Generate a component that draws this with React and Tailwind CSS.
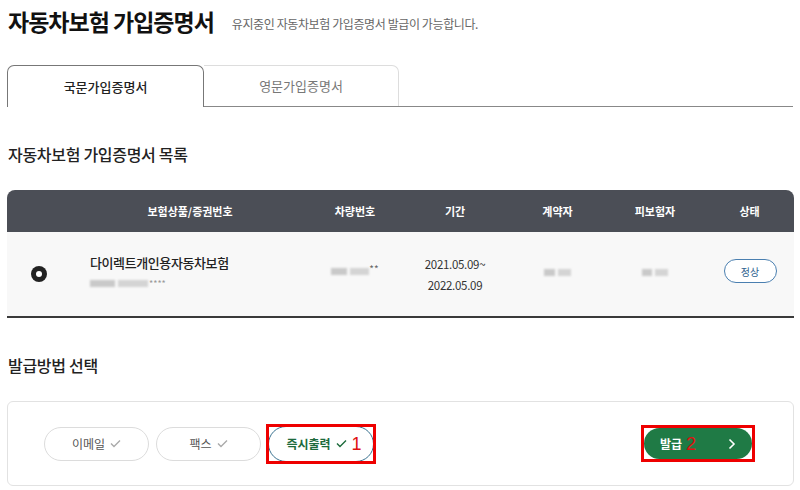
import React from "react";

const font = { fontFamily: '"Noto Sans CJK KR", "Noto Sans", sans-serif' };

const columns = [
  { label: "", w: "w-[63px]" },
  { label: "보험상품/증권번호", w: "w-[240px]" },
  { label: "차량번호", w: "w-[90px]" },
  { label: "기간", w: "w-[110px]" },
  { label: "계약자", w: "w-[95px]" },
  { label: "피보험자", w: "w-[100px]" },
  { label: "상태", w: "flex-1" },
];

// blurred masked values
function Mask({ w = 30 }) {
  return (
    <span className="inline-flex items-center gap-[3px] blur-[1px]">
      <span className="inline-block h-[7px] bg-[#c9c9c9]" style={{ width: w * 0.45 }} />
      <span className="inline-block h-[7px] bg-[#d4d4d4]" style={{ width: w * 0.55 }} />
    </span>
  );
}

function Check({ className }) {
  return (
    <svg width="11" height="9" viewBox="0 0 11 9" className={className}>
      <path d="M1 4.5 L4 7.5 L10 1.5" fill="none" stroke="currentColor" strokeWidth="1.4" />
    </svg>
  );
}

export default function App() {
  return (
    <div className="w-[800px] h-[490px] bg-white overflow-hidden px-[7px] pt-[2px]" style={font}>
      {/* title */}
      <div className="flex items-end gap-[18px] h-[36px]">
        <h1 className="text-[23px] font-bold text-[#111] leading-[34px] tracking-[-1px] pl-[1px]">
          자동차보험 가입증명서
        </h1>
        <p className="text-[12px] text-[#666] leading-[24px] tracking-[-0.4px] pb-[2px]">
          유지중인 자동차보험 가입증명서 발급이 가능합니다.
        </p>
      </div>

      {/* tabs */}
      <div className="flex mt-[27px] h-[42px]">
        <div className="w-[197px] h-full border border-b-0 border-[#777] rounded-t-[7px] flex items-center justify-center text-[13px] font-medium text-[#222]">
          국문가입증명서
        </div>
        <div className="flex-1 flex h-full border-b border-[#888]">
          <div className="w-[195px] h-full border border-l-0 border-b-0 border-[#ddd] rounded-tr-[7px] flex items-center justify-center text-[13px] text-[#777]">
            영문가입증명서
          </div>
        </div>
      </div>

      {/* list heading */}
      <h2 className="mt-[36px] text-[16px] font-medium text-[#222] leading-[22px] tracking-[-0.3px] pl-[1px]">
        자동차보험 가입증명서 목록
      </h2>

      {/* table */}
      <div className="mt-[25px] w-[787px]">
        <div className="flex h-[42px] bg-[#4b4e56] rounded-t-[8px] text-white text-[11px] font-bold">
          {columns.map((c, i) => (
            <div key={i} className={`${c.w} flex items-center justify-center`}>
              {c.label}
            </div>
          ))}
        </div>
        <div className="flex h-[86px] bg-[#f8f8f8] border-b-2 border-[#3a3a3a] text-[#222]">
          <div className="w-[63px] flex items-center justify-center">
            <span className="w-[16px] h-[16px] rounded-full bg-[#222] flex items-center justify-center">
              <span className="w-[6px] h-[6px] rounded-full bg-white" />
            </span>
          </div>
          <div className="w-[240px] flex flex-col justify-center pl-[20px] pb-[4px]">
            <div className="text-[13px] font-medium leading-[20px] tracking-[-0.4px]">다이렉트개인용자동차보험</div>
            <div className="flex items-center h-[16px] mt-[2px]">
              <Mask w={55} />
              <span className="text-[9px] text-[#999] leading-none ml-[1px]">****</span>
            </div>
          </div>
          <div className="w-[90px] flex items-center justify-center pb-[6px]">
            <Mask w={35} />
            <span className="text-[10px] text-[#666] leading-none -mt-[5px]">**</span>
          </div>
          <div className="w-[110px] flex flex-col items-center justify-center text-[11.5px] leading-[21px] text-[#333] pt-[2px] tracking-[-0.3px]">
            <div>2021.05.09~</div>
            <div>2022.05.09</div>
          </div>
          <div className="w-[95px] flex items-center justify-center pb-[4px]">
            <Mask w={24} />
          </div>
          <div className="w-[100px] flex items-center justify-center pb-[4px]">
            <Mask w={24} />
          </div>
          <div className="flex-1 flex items-center justify-center pb-[6px] pl-[1px]">
            <span className="w-[53px] h-[24px] rounded-full border border-[#4a7fb0] flex items-center justify-center text-[10px] text-[#2e5f8f] bg-white">
              정상
            </span>
          </div>
        </div>
      </div>

      {/* method */}
      <h2 className="mt-[36px] text-[16px] font-medium text-[#222] leading-[22px] tracking-[-0.3px] pl-[1px]">
        발급방법 선택
      </h2>

      <div className="mt-[25px] w-[787px] h-[85px] border border-[#e2e2e2] rounded-[6px] flex items-center pl-[36px] pr-[41px]">
        <div className="flex items-center gap-[7px]">
          <button className="w-[105px] h-[34px] rounded-full border border-[#dcdcdc] bg-white flex items-center justify-center gap-[5px] text-[12px] text-[#555]">
            이메일 <Check className="text-[#aaa]" />
          </button>
          <button className="w-[105px] h-[34px] rounded-full border border-[#dcdcdc] bg-white flex items-center justify-center gap-[5px] text-[12px] text-[#555]">
            팩스 <Check className="text-[#aaa]" />
          </button>
          <div className="relative">
            <button className="w-[106px] h-[36px] rounded-full border border-[#3a7290] bg-white flex items-center justify-center gap-[5px] text-[12px] font-bold text-[#1d6b3c] pl-[6px]">
              즉시출력 <Check className="text-[#1d6b3c]" />
              <span className="text-[18px] font-normal text-[#e01010] leading-none" style={{ fontFamily: '"Liberation Sans", sans-serif' }}>1</span>
            </button>
            <span className="absolute -left-[2px] -top-[2px] w-[110px] h-[40px] border-[3px] border-[#ee0000] pointer-events-none" />
          </div>
        </div>
        <div className="ml-auto relative">
          <button className="w-[108px] h-[31px] rounded-full bg-[#1f7a45] flex items-center pl-[16px] pr-[16px] text-white text-[12px] font-bold">
            발급
            <span className="ml-[4px] text-[18px] font-normal text-[#e01010] leading-none" style={{ fontFamily: '"Liberation Sans", sans-serif' }}>2</span>
            <svg width="8" height="12" viewBox="0 0 8 12" className="ml-auto">
              <path d="M1.5 1.5 L6 6 L1.5 10.5" fill="none" stroke="white" strokeWidth="1.6" />
            </svg>
          </button>
          <span className="absolute -left-[3px] -top-[3px] w-[114px] h-[37px] border-[3px] border-[#ee0000] pointer-events-none" />
        </div>
      </div>
    </div>
  );
}
